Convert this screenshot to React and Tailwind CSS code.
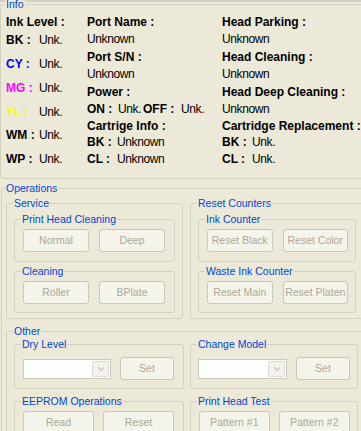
import { ChevronDown } from 'lucide-react';

// XP-style disabled button
const Btn = ({ label, className = '' }) => (
  <div
    className={`flex items-center justify-center h-[23px] rounded-[3px] border border-[#C9C7BA] bg-[#F5F4EA] text-[10.5px] text-[#ACA899] ${className}`}
  >
    {label}
  </div>
);

const Combo = ({ className = '' }) => (
  <div className={`flex justify-end items-stretch h-[20px] border border-[#C9C7BA] bg-white p-[1px] ${className}`}>
    <div className="w-[17px] flex items-center justify-center rounded-[2px] border border-[#DEDCD2] bg-[#F3F2EC]">
      <ChevronDown className="w-[10px] h-[10px] text-[#C9C7BA]" strokeWidth={3} />
    </div>
  </div>
);

const Group = ({ title, className = '', children }) => (
  <fieldset className={`min-w-0 border border-[#D0D0BF] rounded-[3px] ${className}`}>
    <legend className="-ml-[1px] px-[1px] bg-[#ECE9D8] text-[10.5px] leading-[13px] text-[#0046D5]">{title}</legend>
    {children}
  </fieldset>
);

const B = ({ children, className = '' }) => (
  <span className={`font-bold text-[12px] ${className}`}>{children}</span>
);

const V = ({ children }) => <span className="text-[12px] tracking-[-0.4px]">{children}</span>;

export default function App() {
  return (
    <div className="w-[361px] h-[431px] overflow-hidden bg-[linear-gradient(#D2D0C6_0_2px,#ECE9D8_2px)] text-black font-['Liberation_Sans',Arial,sans-serif]">
      {/* Info */}
      <Group title="Info" className="-mt-[2px] w-[372px] h-[181px] pl-[5px]">
        <div className="flex pt-[1px] whitespace-nowrap">
          <div className="w-[81px] flex flex-col">
            <div className="h-[18px] leading-[17px]"><B>Ink Level :</B></div>
            <div className="h-[24px] leading-[17px]"><B className="inline-block w-[33px]">BK :</B><V>Unk.</V></div>
            <div className="h-[24px] leading-[17px]"><B className="inline-block w-[33px] text-[#0000FF]">CY :</B><V>Unk.</V></div>
            <div className="h-[24px] leading-[17px]"><B className="inline-block w-[33px] text-[#FF00FF]">MG :</B><V>Unk.</V></div>
            <div className="h-[23px] leading-[17px]"><B className="inline-block w-[33px] text-[#FFFF00]">YL :</B><V>Unk.</V></div>
            <div className="h-[24px] leading-[17px]"><B className="inline-block w-[33px]">WM :</B><V>Unk.</V></div>
            <div className="h-[17px] leading-[17px]"><B className="inline-block w-[33px]">WP :</B><V>Unk.</V></div>
          </div>
          <div className="w-[135px] flex flex-col">
            <div className="h-[17px] leading-[17px]"><B>Port Name :</B></div>
            <div className="h-[18px] leading-[17px]"><V>Unknown</V></div>
            <div className="h-[17px] leading-[17px]"><B>Port S/N :</B></div>
            <div className="h-[18px] leading-[17px]"><V>Unknown</V></div>
            <div className="h-[17px] leading-[17px]"><B>Power :</B></div>
            <div className="h-[17px] leading-[17px]">
              <B className="inline-block w-[31px]">ON :</B>
              <span className="inline-block w-[25px]"><V>Unk.</V></span>
              <B className="inline-block w-[38px]">OFF :</B>
              <V>Unk.</V>
            </div>
            <div className="h-[16px] leading-[17px]"><B>Cartrige Info :</B></div>
            <div className="h-[17px] leading-[17px]"><B className="inline-block w-[30px]">BK :</B><V>Unknown</V></div>
            <div className="h-[17px] leading-[17px]"><B className="inline-block w-[30px]">CL :</B><V>Unknown</V></div>
          </div>
          <div className="flex flex-col">
            <div className="h-[17px] leading-[17px]"><B>Head Parking :</B></div>
            <div className="h-[18px] leading-[17px]"><V>Unknown</V></div>
            <div className="h-[17px] leading-[17px]"><B>Head Cleaning :</B></div>
            <div className="h-[18px] leading-[17px]"><V>Unknown</V></div>
            <div className="h-[17px] leading-[17px]"><B>Head Deep Cleaning :</B></div>
            <div className="h-[17px] leading-[17px]"><V>Unknown</V></div>
            <div className="h-[16px] leading-[17px]"><B>Cartridge Replacement :</B></div>
            <div className="h-[17px] leading-[17px]"><B className="inline-block w-[30px]">BK :</B><V>Unk.</V></div>
            <div className="h-[17px] leading-[17px]"><B className="inline-block w-[30px]">CL :</B><V>Unk.</V></div>
          </div>
        </div>
      </Group>

      {/* Operations */}
      <Group title="Operations" className="mt-[3px] ml-[1px] w-[380px] pl-[4px] pb-[20px]">
        <div className="flex gap-[7px] mt-[2px]">
          <Group title="Service" className="w-[177px] px-[7px] pb-[5px]">
            <Group title="Print Head Cleaning" className="mt-[3px] w-[161px] px-[7px] pb-[9px]">
              <div className="flex gap-[10px] pl-[1px] mt-[3px]">
                <Btn label="Normal" className="w-[66px]" />
                <Btn label="Deep" className="w-[66px]" />
              </div>
            </Group>
            <Group title="Cleaning" className="mt-[3px] w-[161px] px-[7px] pb-[8px]">
              <div className="flex gap-[10px] pl-[1px] mt-[3px]">
                <Btn label="Roller" className="w-[66px]" />
                <Btn label="BPlate" className="w-[66px]" />
              </div>
            </Group>
          </Group>
          <Group title="Reset Counters" className="w-[180px] px-[7px] pb-[5px]">
            <Group title="Ink Counter" className="mt-[3px] w-[158px] px-[7px] pb-[9px]">
              <div className="flex gap-[10px] pl-[1px] mt-[3px]">
                <Btn label="Reset Black" className="w-[66px]" />
                <Btn label="Reset Color" className="w-[66px]" />
              </div>
            </Group>
            <Group title="Waste Ink Counter" className="mt-[3px] w-[158px] px-[7px] pb-[8px]">
              <div className="flex gap-[10px] pl-[1px] mt-[3px]">
                <Btn label="Reset Main" className="w-[66px]" />
                <Btn label="Reset Platen" className="w-[66px]" />
              </div>
            </Group>
          </Group>
        </div>

        {/* Other */}
        <Group title="Other" className="mt-[6px] w-[366px] px-[7px] pb-[10px]">
          <div className="flex gap-[6px]">
            <div className="w-[170px] flex flex-col">
              <Group title="Dry Level" className="px-[7px] pb-[8px]">
                <div className="flex items-center gap-[9px] pl-[1px] mt-[6px]">
                  <Combo className="w-[88px]" />
                  <Btn label="Set" className="w-[54px] h-[22px]" />
                </div>
              </Group>
              <Group title="EEPROM Operations" className="mt-[6px] px-[7px] pb-[8px]">
                <div className="flex gap-[9px] pl-[1px] mt-[3px]">
                  <Btn label="Read" className="w-[71px]" />
                  <Btn label="Reset" className="w-[71px]" />
                </div>
              </Group>
            </div>
            <div className="w-[168px] flex flex-col">
              <Group title="Change Model" className="px-[7px] pb-[8px]">
                <div className="flex items-center gap-[9px] mt-[6px]">
                  <Combo className="w-[89px]" />
                  <Btn label="Set" className="w-[54px] h-[22px]" />
                </div>
              </Group>
              <Group title="Print Head Test" className="mt-[6px] px-[7px] pb-[8px]">
                <div className="flex gap-[9px] pl-[1px] mt-[3px]">
                  <Btn label="Pattern #1" className="w-[71px]" />
                  <Btn label="Pattern #2" className="w-[72px]" />
                </div>
              </Group>
            </div>
          </div>
        </Group>
      </Group>
    </div>
  );
}
